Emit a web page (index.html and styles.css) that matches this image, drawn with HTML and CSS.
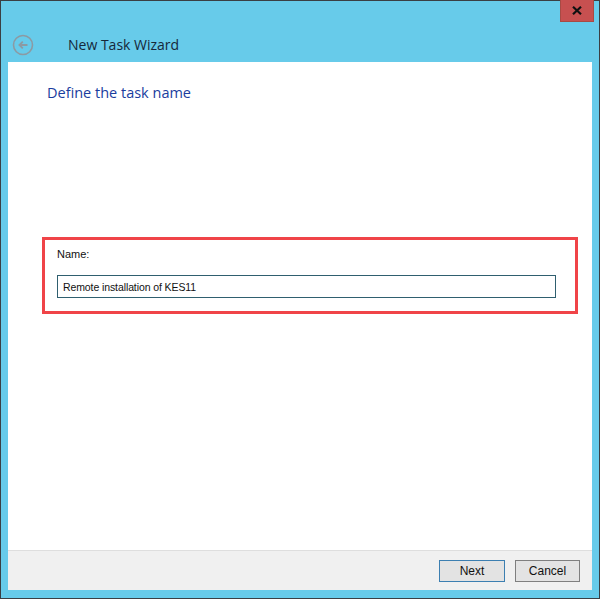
FILE: index.html
```html
<!DOCTYPE html>
<html lang="en">
<head>
  <meta charset="UTF-8">
  <title>New Task Wizard</title>
  <link rel="stylesheet" href="styles.css">
</head>
<body>
  <div class="window">
    <div class="close-btn" title="Close">
      <svg width="10" height="9" viewBox="0 0 10 9">
        <path d="M1 0.8L9 8.2M9 0.8L1 8.2" stroke="#111" stroke-width="2.2"/>
      </svg>
    </div>
    <div class="titlebar">
      <span class="back-btn">
        <svg width="22" height="22" viewBox="0 0 22 22">
          <circle cx="11" cy="11" r="9.5" fill="none" stroke="#8c9aa3" stroke-width="1.6"/>
          <path d="M15.5 11H7.5M10.8 7.6L7.4 11l3.4 3.4" fill="none" stroke="#8c9aa3" stroke-width="1.8"/>
        </svg>
      </span>
      <span class="title">New Task Wizard</span>
    </div>

    <div class="content">
      <h1 class="step-title">Define the task name</h1>

      <div class="field-box">
        <label class="field-label" for="taskName">Name:</label>
        <input class="field-input" id="taskName" type="text" value="Remote installation of KES11">
      </div>
    </div>

    <div class="footer">
      <button class="btn btn-default">Next</button>
      <button class="btn">Cancel</button>
    </div>
  </div>
</body>
</html>
```

FILE: styles.css
```css
html, body {
  margin: 0;
  padding: 0;
}
body {
  width: 600px;
  height: 599px;
  font-family: 'Liberation Sans', Arial, sans-serif;
}
.window {
  box-sizing: border-box;
  width: 600px;
  height: 599px;
  border: 1px solid #3a3f44;
  background: #67cbea;
  padding: 0 7px 8px 7px;
  display: flex;
  flex-direction: column;
  position: relative;
}
.titlebar {
  height: 61px;
  display: flex;
  align-items: flex-end;
  padding-bottom: 6px;
  box-sizing: border-box;
}
.close-btn {
  position: absolute;
  top: -1px;
  right: 5px;
  z-index: 2;
  width: 34px;
  height: 22px;
  box-sizing: border-box;
  border: 1px solid #a84a44;
  border-top: none;
  background-color: #c75050;
  display: flex;
  align-items: center;
  justify-content: center;
}
.back-btn {
  display: flex;
  margin-left: 4px;
}
.title {
  margin-left: 34px;
  font-family: 'Open Sans', 'Noto Sans', sans-serif;
  font-size: 14px;
  color: #16283a;
  line-height: 22px;
}
.content {
  background: #fff;
  flex: 1;
  padding: 21px 14px 0 34px;
}
.step-title {
  margin: 0 0 0 5px;
  font-family: 'Open Sans', 'Noto Sans', sans-serif;
  font-weight: normal;
  font-size: 14.5px;
  color: #1a3d9e;
  line-height: 20px;
}
.field-box {
  margin-top: 134px;
  border: 3px solid #f04448;
  padding: 7px 19px 0 12px;
  box-sizing: border-box;
  height: 77px;
}
.field-label {
  display: block;
  font-size: 11px;
  color: #111;
  line-height: 14px;
  margin-bottom: 14px;
}
.field-input {
  display: block;
  box-sizing: border-box;
  width: 499px;
  height: 23px;
  border: 1px solid #2f5f6f;
  padding: 0 5px;
  font-family: 'Liberation Sans', Arial, sans-serif;
  font-size: 10.5px;
  letter-spacing: -0.1px;
  color: #111;
  outline: none;
}
.footer {
  height: 40px;
  box-sizing: border-box;
  border-top: 1px solid #dedede;
  background: #f0f0f0;
  display: flex;
  justify-content: flex-end;
  align-items: flex-start;
  gap: 10px;
  padding: 9px 12px 0 0;
}
.btn {
  width: 65px;
  height: 22px;
  border: 1px solid #7f7f7f;
  background: #e3e3e3;
  font-family: 'Liberation Sans', Arial, sans-serif;
  font-size: 12px;
  color: #111;
  padding: 0;
}
.btn-default {
  width: 66px;
  border-color: #3c7fb1;
}
```
